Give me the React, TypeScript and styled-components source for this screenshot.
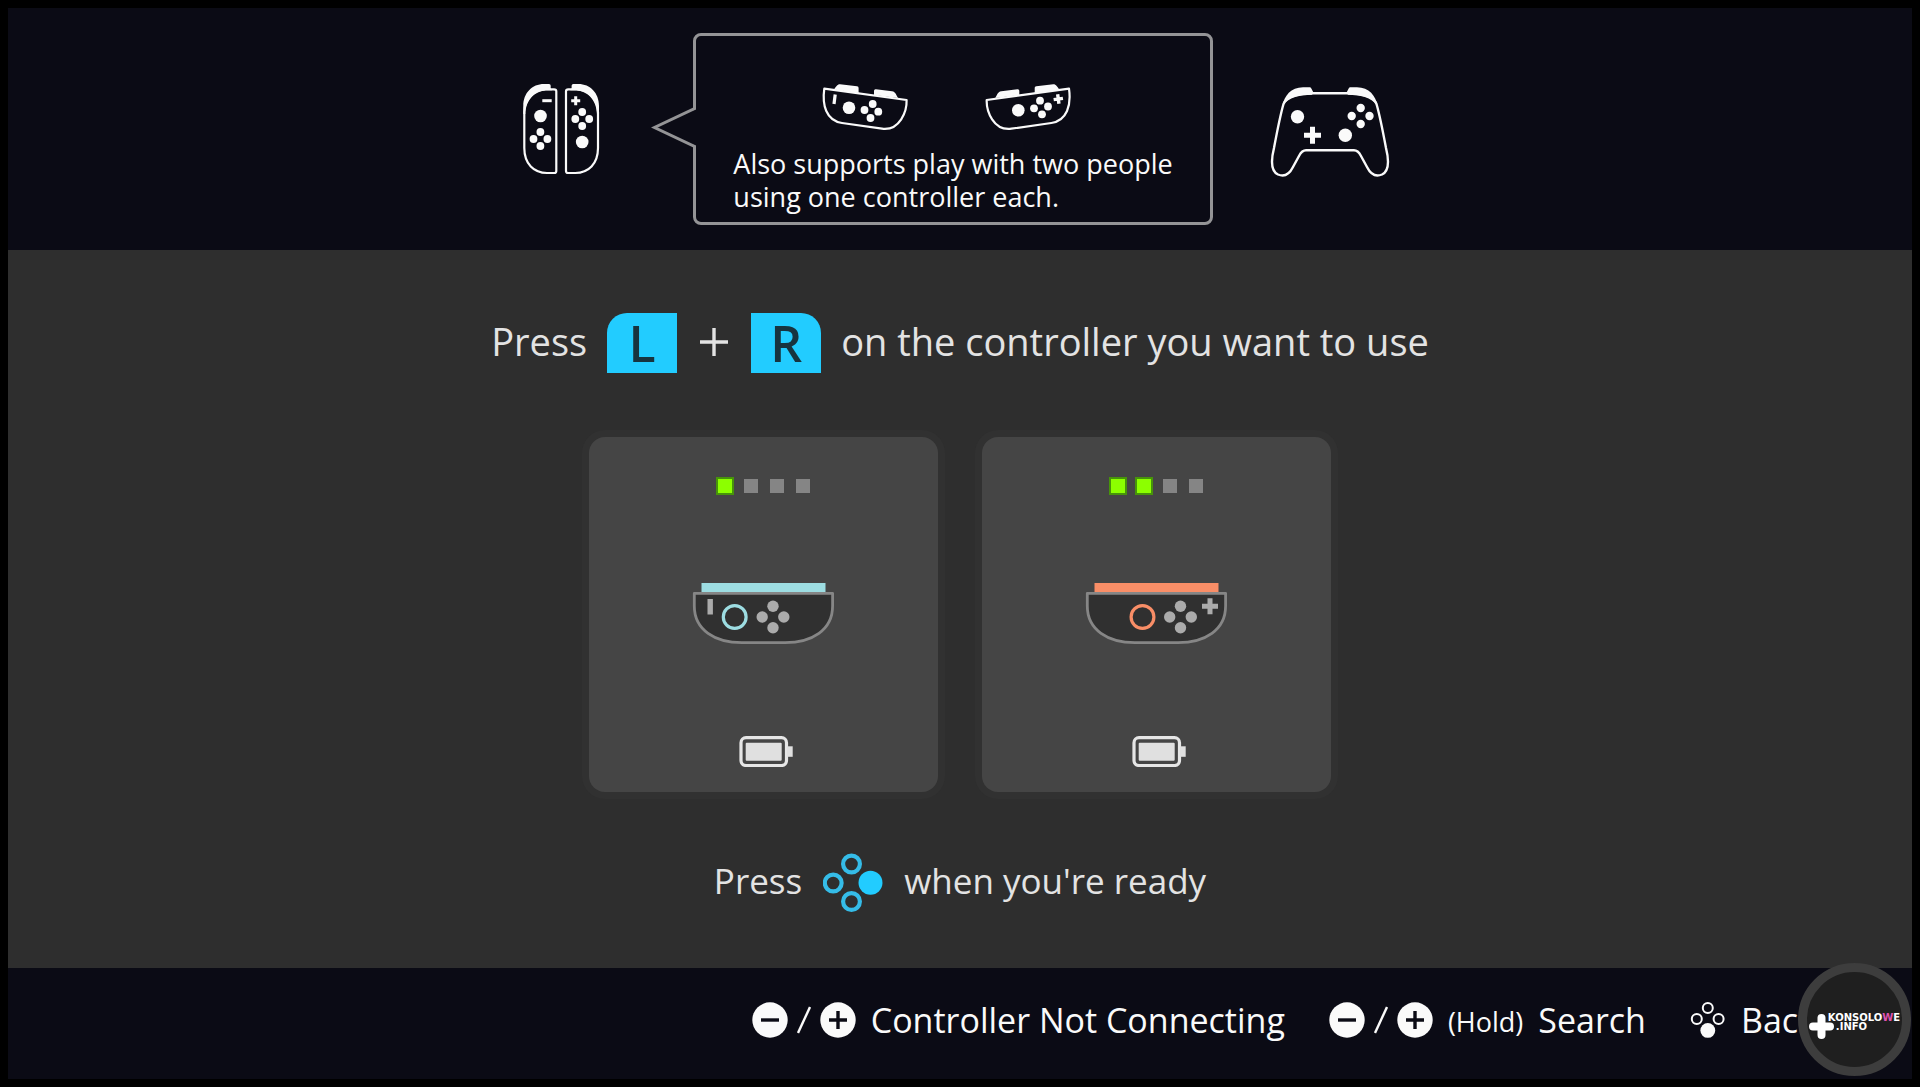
import React from "react";
import styled, { createGlobalStyle } from "styled-components";

const colors = {
  bar: "#0b0b15",
  stage: "#2e2e2e",
  card: "#454545",
  line: "#949496",
  white: "#fafafa",
  text: "#e3e3e3",
  cyan: "#22ccff",
};

const GlobalStyle = createGlobalStyle`
  *, *::before, *::after { box-sizing: border-box; }
  body {
    margin: 0;
    background: #000;
    font-family: "Open Sans", "Noto Sans", sans-serif;
  }
`;

const Screen = styled.div`
  position: relative;
  display: flex;
  flex-direction: column;
  min-height: 100vh;
  padding: 8px;
  background: #000;
`;

const TopBar = styled.header`
  display: flex;
  align-items: center;
  justify-content: center;
  gap: 50px;
  padding: 25px 6px 25px 0;
  background: ${colors.bar};
`;

const Bubble = styled.section`
  position: relative;
  display: flex;
  flex-direction: column;
  align-items: center;
  gap: 13px;
  margin: 0 2px 0 40px;
  padding: 44px 37px 9px;
  border: 3px solid ${colors.line};
  border-radius: 8px;
`;

const Pointer = styled.svg`
  position: absolute;
  left: -45px;
  top: 68px;
`;

const BubbleIcons = styled.div`
  display: flex;
  gap: 69px;
  padding-right: 12px;
`;

const BubbleText = styled.p`
  margin: 0;
  color: ${colors.white};
  font-size: 27px;
  line-height: 33px;
`;

const Stage = styled.main`
  flex: 1;
  display: flex;
  flex-direction: column;
  align-items: center;
  justify-content: center;
  gap: 61px;
  padding: 8px 0 0;
  background: ${colors.stage};
`;

const Prompt = styled.p<{ $size: number; $gap: number }>`
  display: flex;
  align-items: center;
  gap: ${(p) => p.$gap}px;
  margin: 0;
  height: 60px;
  color: ${colors.text};
  font-size: ${(p) => p.$size}px;
  line-height: 56px;
`;

const Words = styled.span`
  padding-bottom: 4px;
`;

const Keys = styled.span`
  display: flex;
  align-items: center;
  gap: 22px;
`;

const Key = styled.kbd<{ $side: "left" | "right" }>`
  display: grid;
  place-items: center;
  width: 70px;
  height: 60px;
  border-radius: ${(p) => (p.$side === "left" ? "20px 0 0 0" : "0 20px 0 0")};
  background: ${colors.cyan};
  color: #17343f;
  font: 600 50px/60px "Open Sans", "Noto Sans", sans-serif;
`;

const Cards = styled.div`
  display: flex;
  gap: 44px;
  padding-top: 3px;
`;

const Card = styled.article`
  display: flex;
  flex-direction: column;
  align-items: center;
  gap: 85px;
  width: 349px;
  padding: 40px 0 25px;
  border-radius: 16px;
  background: ${colors.card};
  box-shadow: 0 0 0 7px #313131;
`;

const Lights = styled.div`
  display: flex;
  align-items: center;
  gap: 12px;
  height: 18px;
`;

const Light = styled.i<{ $on: boolean }>`
  width: 14px;
  height: 14px;
  background: ${(p) => (p.$on ? "#8cff00" : "#858585")};
  box-shadow: ${(p) => (p.$on ? "0 0 0 2px #47940a" : "none")};
`;

const BottomBar = styled.footer`
  display: flex;
  align-items: center;
  justify-content: flex-end;
  gap: 44px;
  height: 111px;
  padding: 0 96px 8px 0;
  background: ${colors.bar};
`;

const Action = styled.button`
  display: flex;
  align-items: center;
  gap: 15px;
  padding: 0;
  border: 0;
  background: none;
  color: ${colors.white};
  font: 34px/48px "Open Sans", "Noto Sans", sans-serif;
  white-space: nowrap;
  cursor: pointer;
`;

const Pair = styled.span`
  display: flex;
  align-items: center;
  gap: 9px;
`;

const Hold = styled.small`
  padding-top: 4px;
  font-size: 27px;
`;

const Badge = styled.a`
  position: absolute;
  right: 9px;
  bottom: 11px;
  display: flex;
  align-items: center;
  justify-content: center;
  width: 113px;
  height: 113px;
  border: 9px solid #3d3d3d;
  border-radius: 50%;
  background: #1f1f1f;
  color: #fff;
  font: bold 10px/9px "DejaVu Sans", sans-serif;
  text-decoration: none;
`;

const BadgeMark = styled.svg`
  flex: none;
  margin: 14px -6px 0 0;
`;

const BadgeText = styled.span`
  display: flex;
  flex-direction: column;
  padding-top: 4px;
`;

const BadgeDomain = styled.span`
  padding-left: 8px;
`;

const Pink = styled.span`
  color: #e052b0;
`;

type Dot = [number, number];

const Dots = ({ at, r, fill = colors.white }: { at: Dot[]; r: number; fill?: string }) => (
  <g fill={fill}>
    {at.map(([x, y]) => (
      <circle key={`${x},${y}`} cx={x} cy={y} r={r} />
    ))}
  </g>
);

const halfOutline =
  "M35 9.3H27C14 9.3 5.3 20 5.3 32V68C5.3 84 15 93 28 93H35.3Q37.3 93 37.3 91V11.3Q37.3 9.3 35 9.3Z";
const halfShoulder =
  "M4.3 34V26C4.3 13 13 4 25 4H30Q31.7 4 31.7 5.7V8.3L33 10.3H29C16 10.3 6.8 20 6.3 34Z";

const JoyConPair = () => (
  <svg width="84" height="98" viewBox="0 0 84 98" aria-label="Joy-Con pair">
    <path d={halfOutline} fill="none" stroke={colors.white} strokeWidth="2.2" />
    <path d={halfShoulder} fill={colors.white} />
    <path d="M23.3 20.7H32.7" stroke={colors.white} strokeWidth="3" />
    <Dots at={[[21.5, 36]]} r={6.3} />
    <Dots at={[[21.4, 52], [14.5, 59], [28.4, 59], [21.4, 66]]} r={3.9} />
    <g transform="matrix(-1 0 0 1 84.3 0)">
      <path d={halfOutline} fill="none" stroke={colors.white} strokeWidth="2.2" />
      <path d={halfShoulder} fill={colors.white} />
    </g>
    <path d="M52.2 20.7H61.2M56.7 16.2V25.2" stroke={colors.white} strokeWidth="3" />
    <Dots at={[[63.2, 62]]} r={6.3} />
    <Dots at={[[63.2, 32], [56.3, 39], [70.2, 39], [63.2, 46]]} r={3.9} />
  </svg>
);

const TiltedShell = () => (
  <>
    <path
      d="M4.3 8.6L86.6 20C87 31 80 51 62 48.7L22 43C6 40.5 2 25 4.3 8.6Z"
      fill="none"
      stroke={colors.white}
      strokeWidth="2.2"
      strokeLinejoin="round"
    />
    <path
      d="M14 9.5C16 7 17 4.3 20 4.3L37 6.3Q38.7 6.5 38.6 8V13ZM54 15V10.8Q54 9 56 9.3L72 11.3C76 12 76 15 78 18Z"
      fill={colors.white}
    />
  </>
);

const TiltedLeft = () => (
  <svg width="92" height="54" viewBox="0 0 92 54" aria-label="Left Joy-Con">
    <TiltedShell />
    <path d="M15.2 14.5L14 24" stroke={colors.white} strokeWidth="3.2" />
    <Dots at={[[29, 27.7]]} r={6.3} />
    <Dots at={[[52.7, 24], [44.5, 30], [58.3, 31.7], [50.5, 38]]} r={3.9} />
  </svg>
);

const TiltedRight = () => (
  <svg width="92" height="54" viewBox="0 0 92 54" aria-label="Right Joy-Con">
    <g transform="matrix(-1 0 0 1 92.3 0)">
      <TiltedShell />
    </g>
    <path
      d="M72.6 19H82M77.3 14.3V23.7"
      transform="rotate(-8 77.3 19)"
      stroke={colors.white}
      strokeWidth="3.4"
    />
    <Dots at={[[37.3, 30.3]]} r={6.3} />
    <Dots at={[[59, 20.7], [53, 28.3], [67, 26.5], [61, 34.3]]} r={3.9} />
  </svg>
);

const proShoulder =
  "M17.6 26C19 16 26 7.3 38 7.3H45Q46 7.3 46.6 9L48.3 12.2L47 14.8C36 15 23 17 17.6 26Z";

const ProController = () => (
  <svg width="130" height="98" viewBox="0 0 130 98" aria-label="Pro Controller">
    <path
      d="M48 13.3H82C96 14 108 15 111.5 24C115 36 118 52 121 68C124.5 82 124 91 117 94.5C110 97.5 105 93 102 87L96 76Q93 70.3 89 70.3H41Q37 70.3 34 76L28 87C25 93 20 97.5 13 94.5C6 91 5.5 82 9 68C12 52 15 36 18.5 24C22 15 34 14 48 13.3Z"
      fill="none"
      stroke={colors.white}
      strokeWidth="2.4"
    />
    <path d={proShoulder} fill={colors.white} />
    <path d={proShoulder} fill={colors.white} transform="matrix(-1 0 0 1 130 0)" />
    <path d="M39 55.3H56M47.5 46.8V63.8" stroke={colors.white} strokeWidth="5" />
    <Dots at={[[32.5, 36.7], [80.3, 55.3]]} r={6.7} />
    <Dots at={[[95.7, 28], [86.7, 36], [104.5, 36], [95.7, 44]]} r={4.2} />
  </svg>
);

const SideJoyCon = ({ side }: { side: "left" | "right" }) => {
  const left = side === "left";
  const accent = left ? "#9ddde2" : "#f98e67";
  const stick = left ? 44.7 : 59.5;
  const face = left ? 83 : 97.5;
  return (
    <svg width="147" height="71" viewBox="0 0 147 71" aria-label={`${side} Joy-Con`}>
      <rect x="11.5" y="3" width="124" height="10" fill={accent} />
      <path
        d="M4.3 13.3H142.6V26C142.6 50 122 62.6 95 62.6H52C25 62.6 4.3 50 4.3 26Z"
        fill="#303030"
        stroke="#868686"
        strokeWidth="2.8"
        strokeLinejoin="round"
      />
      <circle cx={stick} cy="37" r="11.4" fill="none" stroke={accent} strokeWidth="3.2" />
      <Dots
        at={[[face, 26.2], [face - 10.8, 37], [face + 10.8, 37], [face, 47.8]]}
        r={5.7}
        fill="#ababab"
      />
      {left ? (
        <rect x="17.5" y="19" width="5.4" height="15.5" fill="#ababab" />
      ) : (
        <path d="M119 26.3H135M127 18.3V34.3" stroke="#ababab" strokeWidth="5" />
      )}
    </svg>
  );
};

const Battery = () => (
  <svg width="59" height="31" viewBox="0 0 59 31" aria-label="Battery full">
    <rect x="7" y="1.7" width="45.5" height="27.8" rx="5" fill="none" stroke="#e6e6e6" strokeWidth="3.2" />
    <rect x="11.7" y="6.7" width="36" height="18" rx="1" fill="#e0e0e0" />
    <rect x="53" y="10.3" width="5.7" height="10.5" fill="#e0e0e0" />
  </svg>
);

const ReadyButtons = () => (
  <svg width="60" height="60" viewBox="0 0 60 60" aria-label="A">
    <g fill="none" stroke="#35bce8" strokeWidth="4.2">
      <circle cx="28.5" cy="11" r="8.4" />
      <circle cx="10.2" cy="30" r="8.4" />
      <circle cx="28.5" cy="48.5" r="8.4" />
    </g>
    <circle cx="47.5" cy="29.7" r="12" fill={colors.cyan} />
  </svg>
);

const BackButtons = () => (
  <svg width="36" height="36" viewBox="0 0 36 36" aria-hidden="true">
    <g fill="none" stroke={colors.white} strokeWidth="2">
      <circle cx="17.8" cy="6" r="5" />
      <circle cx="6.8" cy="17" r="5" />
      <circle cx="28.6" cy="17" r="5" />
    </g>
    <circle cx="17.8" cy="28.4" r="7.4" fill={colors.white} />
  </svg>
);

const RoundSign = ({ plus = false }: { plus?: boolean }) => (
  <svg width="36" height="36" viewBox="0 0 36 36" aria-hidden="true">
    <circle cx="18" cy="18" r="17.7" fill={colors.white} />
    <path d={plus ? "M9 18H27M18 9V27" : "M9 18H27"} stroke={colors.bar} strokeWidth="3.4" />
  </svg>
);

const MinusPlus = () => (
  <Pair>
    <RoundSign />
    <svg width="14" height="28" viewBox="0 0 14 28" aria-label="or">
      <path d="M1 27L13 1" stroke={colors.white} strokeWidth="2.4" />
    </svg>
    <RoundSign plus />
  </Pair>
);

const PlusSign = () => (
  <svg width="30" height="30" viewBox="0 0 30 30" aria-label="plus">
    <path d="M1 14H29M15 0V28" stroke={colors.text} strokeWidth="3.4" />
  </svg>
);

const players: { side: "left" | "right"; lit: number }[] = [
  { side: "left", lit: 1 },
  { side: "right", lit: 2 },
];

export default function App() {
  return (
    <>
      <GlobalStyle />
      <Screen>
        <TopBar>
          <JoyConPair />
          <Bubble>
            <Pointer width="45" height="46" viewBox="0 0 45 46" aria-hidden="true">
              <path d="M46 4.5L4 23.5L46 42.5Z" fill={colors.bar} />
              <path d="M43.5 0V4.5L3.5 23.5L43.5 42.5V46" fill="none" stroke={colors.line} strokeWidth="3" />
            </Pointer>
            <BubbleIcons>
              <TiltedLeft />
              <TiltedRight />
            </BubbleIcons>
            <BubbleText>
              Also supports play with two people
              <br />
              using one controller each.
            </BubbleText>
          </Bubble>
          <ProController />
        </TopBar>

        <Stage>
          <Prompt $size={38} $gap={20}>
            <Words>Press</Words>
            <Keys>
              <Key $side="left">L</Key>
              <PlusSign />
              <Key $side="right">R</Key>
            </Keys>
            <Words>on the controller you want to use</Words>
          </Prompt>

          <Cards>
            {players.map(({ side, lit }) => (
              <Card key={side}>
                <Lights>
                  {[0, 1, 2, 3].map((n) => (
                    <Light key={n} $on={n < lit} />
                  ))}
                </Lights>
                <SideJoyCon side={side} />
                <Battery />
              </Card>
            ))}
          </Cards>

          <Prompt $size={35} $gap={21}>
            <Words>Press</Words>
            <ReadyButtons />
            <Words>when you're ready</Words>
          </Prompt>
        </Stage>

        <BottomBar>
          <Action>
            <MinusPlus />
            Controller Not Connecting
          </Action>
          <Action>
            <MinusPlus />
            <Hold>(Hold)</Hold>
            Search
          </Action>
          <Action>
            <BackButtons />
            Back
          </Action>
        </BottomBar>

        <Badge href="#" aria-label="Konsolowe.info">
          <BadgeMark width="25" height="25" viewBox="0 0 25 25">
            <path d="M12.5 4V21M4 12.5H21" stroke="#fff" strokeWidth="8" strokeLinecap="round" />
          </BadgeMark>
          <BadgeText>
            <span>
              KONSOLO<Pink>W</Pink>E
            </span>
            <BadgeDomain>.INFO</BadgeDomain>
          </BadgeText>
        </Badge>
      </Screen>
    </>
  );
}
